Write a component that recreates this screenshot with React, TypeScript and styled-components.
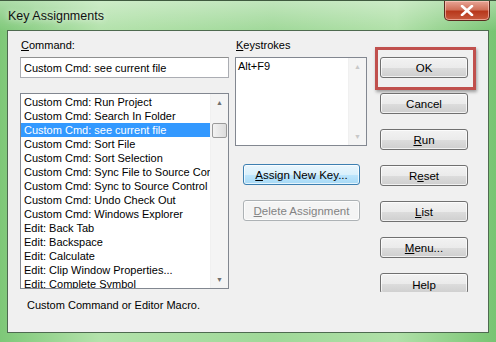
import React from "react";
import styled, { createGlobalStyle } from "styled-components";

const GlobalStyle = createGlobalStyle`
  html, body {
    margin: 0;
    padding: 0;
    width: 496px;
    height: 342px;
    overflow: hidden;
  }
  body {
    font-family: "Liberation Sans", Arial, sans-serif;
    font-size: 11px;
    color: #000;
  }
`;

const commands = [
  "Custom Cmd: Run Project",
  "Custom Cmd: Search In Folder",
  "Custom Cmd: see current file",
  "Custom Cmd: Sort File",
  "Custom Cmd: Sort Selection",
  "Custom Cmd: Sync File to Source Control",
  "Custom Cmd: Sync to Source Control Project",
  "Custom Cmd: Undo Check Out",
  "Custom Cmd: Windows Explorer",
  "Edit: Back Tab",
  "Edit: Backspace",
  "Edit: Calculate",
  "Edit: Clip Window Properties...",
  "Edit: Complete Symbol",
];

const rightButtons: { label: string; key?: number }[] = [
  { label: "OK" },
  { label: "Cancel" },
  { label: "Run", key: 0 },
  { label: "Reset", key: 1 },
  { label: "List", key: 0 },
  { label: "Menu...", key: 0 },
];

const Hot = ({ text, at }: { text: string; at?: number }) => {
  if (at === undefined) return <>{text}</>;
  return (
    <span>
      {text.slice(0, at)}
      <u>{text[at]}</u>
      {text.slice(at + 1)}
    </span>
  );
};

export default function App() {
  return (
    <>
      <GlobalStyle />
      <Frame>
        <TitleBar>
          <Title>Key Assignments</Title>
          <CloseButton>
            <svg width="14" height="11" viewBox="0 0 14 11">
              <path
                d="M2 1 L12 10 M12 1 L2 10"
                stroke="#fff"
                strokeWidth="2.6"
                strokeLinecap="round"
              />
            </svg>
          </CloseButton>
        </TitleBar>
        <Client>
          <LeftColumn>
            <Label>
              <u>C</u>ommand:
            </Label>
            <Edit>Custom Cmd: see current file</Edit>
            <ListBox>
              <ListItems>
                {commands.map((c) => (
                  <ListItem key={c} $selected={c.endsWith("see current file")}>
                    {c}
                  </ListItem>
                ))}
              </ListItems>
              <ScrollBar>
                <Arrow>▲</Arrow>
                <Track>
                  <Thumb />
                </Track>
                <Arrow>▼</Arrow>
              </ScrollBar>
            </ListBox>
            <Description>Custom Command or Editor Macro.</Description>
          </LeftColumn>

          <MiddleColumn>
            <Label>
              <u>K</u>eystrokes
            </Label>
            <KeyList>
              <ListItems>
                <KeyItem>Alt+F9</KeyItem>
              </ListItems>
              <ScrollBar $disabled>
                <Arrow>▲</Arrow>
                <Track />
                <Arrow>▼</Arrow>
              </ScrollBar>
            </KeyList>
            <MiddleButtons>
              <Button $variant="focused" $width={117}>
                <Hot text="Assign New Key..." at={0} />
              </Button>
              <Button $variant="disabled" $width={117}>
                <Hot text="Delete Assignment" at={0} />
              </Button>
            </MiddleButtons>
          </MiddleColumn>

          <RightColumn>
            {rightButtons.map((b, i) => (
              <ButtonSlot key={b.label}>
                <Button $width={88}>
                  <Hot text={b.label} at={b.key} />
                </Button>
                {i === 0 && <Highlight />}
              </ButtonSlot>
            ))}
            <ClippedSlot>
              <Button $width={88} $open>
                Help
              </Button>
            </ClippedSlot>
          </RightColumn>
        </Client>
      </Frame>
    </>
  );
}

const Frame = styled.div`
  width: 496px;
  height: 342px;
  box-sizing: border-box;
  display: flex;
  flex-direction: column;
  padding: 0 7px 9px 7px;
  border-top: 1px solid #3f5a3f;
  background: linear-gradient(
      180deg,
      rgba(255, 255, 255, 0.35) 0%,
      rgba(255, 255, 255, 0) 9%
    ),
    linear-gradient(90deg, #7ec878 0%, #b3e2ab 20%, #9fd898 55%, #b0e0a8 80%, #78c472 100%);
`;

const TitleBar = styled.div`
  height: 29px;
  display: flex;
  align-items: flex-start;
  justify-content: space-between;
`;

const Title = styled.div`
  font-family: "Liberation Sans", Arial, sans-serif;
  font-size: 12.5px;
  padding: 8px 0 0 1px;
  color: #111;
  text-shadow: 0 0 6px rgba(255, 255, 255, 0.9);
`;

const CloseButton = styled.div`
  width: 44px;
  height: 19px;
  margin-right: -1px;
  display: flex;
  align-items: center;
  justify-content: center;
  border: 1px solid #5a2a1e;
  border-top: none;
  border-radius: 0 0 5px 5px;
  background: linear-gradient(180deg, #e8a596 0%, #d0715a 45%, #b8381c 55%, #c85a3e 100%);
  box-shadow: inset 0 0 0 1px rgba(255, 210, 200, 0.6);
`;

const Client = styled.div`
  flex: 1;
  display: flex;
  position: relative;
  background: #f0f0f0;
  border: 1px solid #4e6a50;
  padding: 7px 0 0 12px;
`;

const LeftColumn = styled.div`
  width: 209px;
  display: flex;
  flex-direction: column;
`;

const MiddleColumn = styled.div`
  width: 132px;
  margin-left: 6px;
  display: flex;
  flex-direction: column;
`;

const RightColumn = styled.div`
  width: 88px;
  margin-left: 13px;
  padding-top: 19px;
  display: flex;
  flex-direction: column;
  gap: 15px;
`;

const Label = styled.div`
  height: 19px;
  line-height: 14px;
  padding-left: 1px;
`;

const Edit = styled.div`
  height: 21px;
  box-sizing: border-box;
  border: 1px solid #abadb3;
  border-top-color: #8e8f8f;
  background: #fff;
  padding: 3px 0 0 3px;
  line-height: 14px;
`;

const ListBox = styled.div`
  margin-top: 15px;
  height: 196px;
  box-sizing: border-box;
  border: 1px solid #828790;
  background: #fff;
  display: flex;
  overflow: hidden;
`;

const ListItems = styled.div`
  flex: 1;
  overflow: hidden;
  padding-top: 1px;
`;

const ListItem = styled.div<{ $selected?: boolean }>`
  height: 14px;
  line-height: 14px;
  white-space: nowrap;
  padding-left: 3px;
  background: ${(p) => (p.$selected ? "#3399ff" : "transparent")};
  color: ${(p) => (p.$selected ? "#fff" : "#000")};
`;

const ScrollBar = styled.div<{ $disabled?: boolean }>`
  width: 17px;
  display: flex;
  flex-direction: column;
  background: #f4f4f4;
  border-left: 1px solid #f0f0f0;
  color: ${(p) => (p.$disabled ? "#c8c8c8" : "#6f6f6f")};
`;

const Arrow = styled.div`
  height: 17px;
  font-size: 7px;
  display: flex;
  align-items: center;
  justify-content: center;
`;

const Track = styled.div`
  flex: 1;
  position: relative;
`;

const Thumb = styled.div`
  position: absolute;
  left: 1px;
  right: 1px;
  top: 12px;
  height: 15px;
  box-sizing: border-box;
  border: 1px solid #9a9a9a;
  border-radius: 2px;
  background: linear-gradient(90deg, #f2f2f2, #dcdcdc);
`;

const Description = styled.div`
  margin-top: 9px;
  padding-left: 7px;
  line-height: 14px;
`;

const KeyList = styled.div`
  height: 89px;
  box-sizing: border-box;
  border: 1px solid #828790;
  background: #fff;
  display: flex;
`;

const KeyItem = styled.div`
  padding-left: 2px;
  line-height: 14px;
`;

const MiddleButtons = styled.div`
  margin-top: 18px;
  padding-left: 8px;
  display: flex;
  flex-direction: column;
  gap: 15px;
`;

const ButtonSlot = styled.div`
  position: relative;
  height: 21px;
`;

const ClippedSlot = styled.div`
  height: 19px;
  overflow: hidden;
`;

const Button = styled.div<{ $variant?: "focused" | "disabled"; $width: number; $open?: boolean }>`
  width: ${(p) => p.$width}px;
  height: 21px;
  box-sizing: border-box;
  border-radius: 3px;
  display: flex;
  align-items: center;
  justify-content: center;
  line-height: 14px;
  font-size: 11.5px;
  border: 1px solid
    ${(p) =>
      p.$variant === "focused" ? "#3c7fb1" : p.$variant === "disabled" ? "#adb2b5" : "#707070"};
  color: ${(p) => (p.$variant === "disabled" ? "#838383" : "#000")};
  background: ${(p) =>
    p.$variant === "focused"
      ? "linear-gradient(180deg, #eaf6fd 0%, #d9f0fc 50%, #bee6fd 51%, #a7d9f5 100%)"
      : p.$variant === "disabled"
      ? "#f4f4f4"
      : "linear-gradient(180deg, #f2f2f2 0%, #ebebeb 50%, #dddddd 51%, #cfcfcf 100%)"};
  box-shadow: inset 0 0 0 1px rgba(255, 255, 255, 0.7);
  padding-top: ${(p) => (p.$open ? "3px" : "0")};
`;

const Highlight = styled.div`
  position: absolute;
  left: -5px;
  top: -10px;
  width: 101px;
  height: 43px;
  box-sizing: border-box;
  border: 3px solid #c0504d;
  box-shadow: 1px 2px 3px rgba(0, 0, 0, 0.35);
  pointer-events: none;
`;
